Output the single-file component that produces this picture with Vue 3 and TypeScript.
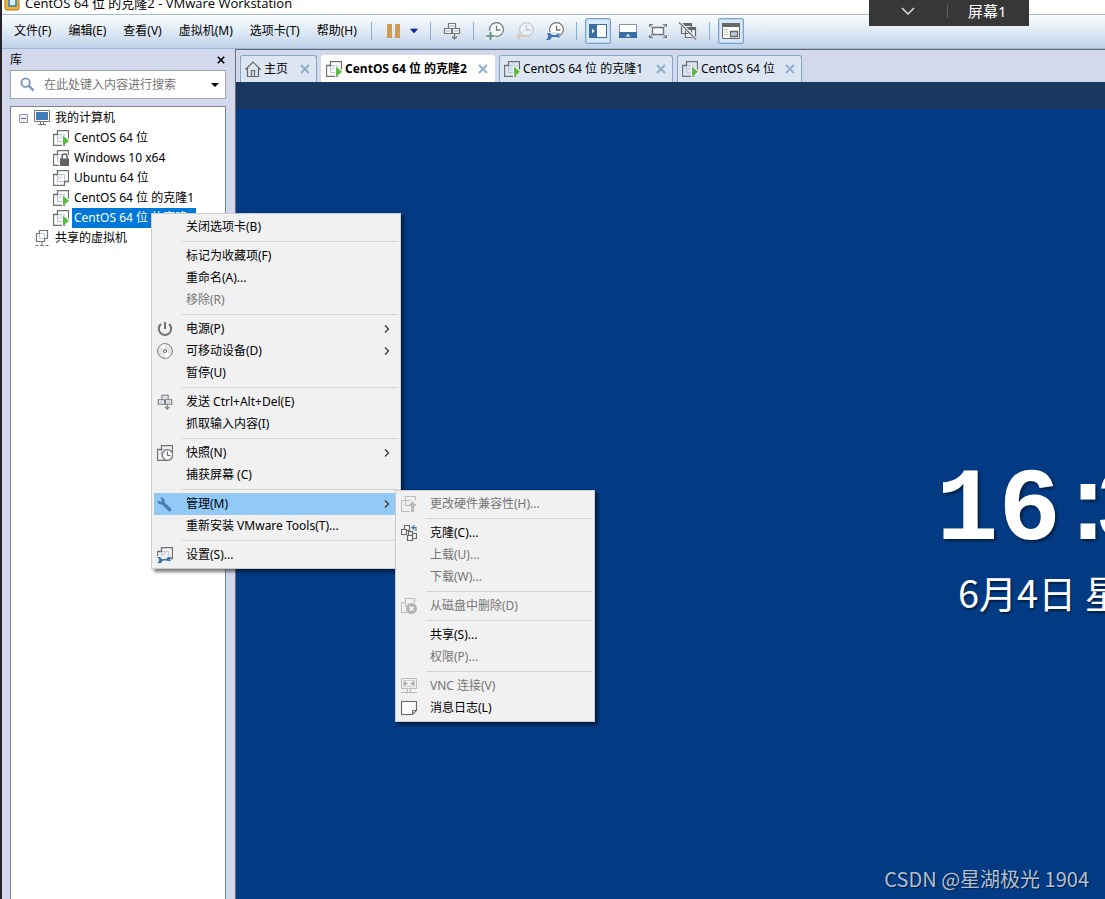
<script setup lang="ts">
import { ref } from 'vue'

interface MenuEntry {
  label?: string
  icon?: string
  disabled?: boolean
  submenu?: boolean
  active?: boolean
}

interface ToolItem {
  name?: string
  icon?: string
  pressed?: boolean
  narrow?: boolean
}

const menus: string[] = ['文件(F)', '编辑(E)', '查看(V)', '虚拟机(M)', '选项卡(T)', '帮助(H)']

const tools: ToolItem[] = [
  {},
  { name: '挂起', icon: 'pause' },
  { name: '电源选项', icon: 'drop', narrow: true },
  {},
  { name: '发送 Ctrl+Alt+Del', icon: 'keys' },
  {},
  { name: '拍摄快照', icon: 'snap-add' },
  { name: '恢复快照', icon: 'snap-back' },
  { name: '管理快照', icon: 'snap-manage' },
  {},
  { name: '显示库', icon: 'library', pressed: true },
  { name: '缩略图栏', icon: 'thumbs' },
  { name: '全屏', icon: 'full' },
  { name: 'Unity', icon: 'unity' },
  {},
  { name: '控制台视图', icon: 'console', pressed: true },
]

const tabs = [
  { label: '主页', icon: 'home', kind: 'home' },
  { label: 'CentOS 64 位 的克隆2', icon: 'vm-run', kind: 'active' },
  { label: 'CentOS 64 位 的克隆1', icon: 'vm-run', kind: 'wide' },
  { label: 'CentOS 64 位', icon: 'vm-run', kind: 'short' },
]

const machines = [
  { label: 'CentOS 64 位', icon: 'vm-run' },
  { label: 'Windows 10 x64', icon: 'vm-lock' },
  { label: 'Ubuntu 64 位', icon: 'vm' },
  { label: 'CentOS 64 位 的克隆1', icon: 'vm-run' },
  { label: 'CentOS 64 位 的克隆2', icon: 'vm-run', selected: true },
]

const contextMenu: MenuEntry[] = [
  { label: '关闭选项卡(B)' },
  {},
  { label: '标记为收藏项(F)' },
  { label: '重命名(A)...' },
  { label: '移除(R)', disabled: true },
  {},
  { label: '电源(P)', icon: 'power', submenu: true },
  { label: '可移动设备(D)', icon: 'disc', submenu: true },
  { label: '暂停(U)' },
  {},
  { label: '发送 Ctrl+Alt+Del(E)', icon: 'keys' },
  { label: '抓取输入内容(I)' },
  {},
  { label: '快照(N)', icon: 'vm-clock', submenu: true },
  { label: '捕获屏幕 (C)' },
  {},
  { label: '管理(M)', icon: 'wrench', submenu: true, active: true },
  { label: '重新安装 VMware Tools(T)...' },
  {},
  { label: '设置(S)...', icon: 'vm-wrench' },
]

const manageMenu: MenuEntry[] = [
  { label: '更改硬件兼容性(H)...', icon: 'vm-up', disabled: true },
  {},
  { label: '克隆(C)...', icon: 'clone' },
  { label: '上载(U)...', disabled: true },
  { label: '下载(W)...', disabled: true },
  {},
  { label: '从磁盘中删除(D)', icon: 'vm-delete', disabled: true },
  {},
  { label: '共享(S)...' },
  { label: '权限(P)...', disabled: true },
  {},
  { label: 'VNC 连接(V)', icon: 'vnc', disabled: true },
  { label: '消息日志(L)', icon: 'note' },
]

const popups = [
  { name: '虚拟机', place: 'context', entries: contextMenu },
  { name: '管理', place: 'manage', entries: manageMenu },
]

const query = ref('')
</script>

<template>
  <div class="app">
    <svg class="defs" aria-hidden="true">
      <symbol id="vm" viewBox="0 0 16 16">
        <path d="M4.500 4.500v7h7v-7zM4 8h3.500M8 4v3.500" fill="none" stroke="#b9c5da" />
        <path d="M4.500 5V.500h11v11H11M5 4.500H.500v11h11V11" fill="none" stroke="#707070" stroke-width="1.300" />
      </symbol>
      <symbol id="vm-run" viewBox="0 0 16 16">
        <use href="#vm" />
        <path d="M9 4v12h1l6-4V9z" fill="#fff" />
        <path d="M10 5.500V16l6-5.200z" fill="#5cba44" />
      </symbol>
      <symbol id="vm-lock" viewBox="0 0 16 16">
        <use href="#vm" />
        <path d="M6 5h10v11H6z" fill="#fff" />
        <path d="M7 8.500h9V16H7z" fill="#636363" />
        <path d="M9 9V6.500a2.500 2.500 0 0 1 5 0V9" fill="none" stroke="#636363" stroke-width="1.500" />
      </symbol>
      <symbol id="vm-clock" viewBox="0 0 16 16">
        <use href="#vm" />
        <circle cx="10.500" cy="10" r="5.300" fill="#f8f8f8" stroke="#747474" stroke-width="1.200" />
        <path d="M10.500 6.500V10.500h3" fill="none" stroke="#666" />
      </symbol>
      <symbol id="vm-wrench" viewBox="0 0 16 16">
        <use href="#vm" />
        <path d="M0 9h12v7H0z" fill="#f1f1f1" />
        <path d="M0 10h3l2 2h4l2-2h3l-1.500 2 1.500 2h-3l-2-.500H6L4 16H0l2-2v-2z" fill="#3f76ad" />
      </symbol>
      <symbol id="vm-up" viewBox="0 0 16 16">
        <path d="M4.500 4.500v-4h10v4M5 4.500H.500v11H9M4.500 4.500v5h4M4.500 4.500h5" fill="none" stroke="#bdbdbd" stroke-width="1.200" />
        <path d="M11.500 5L16 10h-3v6h-3v-6H7z" fill="#b9b9b9" />
      </symbol>
      <symbol id="vm-delete" viewBox="0 0 16 16">
        <path d="M4.500 5V.500h9v4M5 4.500H.500v10H6M4.500 5v4" fill="none" stroke="#bdbdbd" stroke-width="1.200" />
        <circle cx="10.500" cy="10.500" r="5.500" fill="#b3b3b3" />
        <path d="M8.500 8.500l4 4m0-4l-4 4" stroke="#fff" stroke-width="1.500" />
      </symbol>
      <symbol id="clone" viewBox="0 0 16 16">
        <g fill="#f7f7f7" stroke="#666" stroke-width="1.200">
          <path d="M3.500.500h5v5h-5z" />
          <path d="M.500 4.500h5v5h-5z" />
          <path d="M10.500 8.500h5v5h-5z" />
          <path d="M7.500 6.500h4v4h-4z" />
          <path d="M6.500 10.500h5v5h-5z" />
        </g>
        <path d="M15 6V2.500h-4M13.500.500l-2.500 2 2.500 2" fill="none" stroke="#3f76ad" stroke-width="1.200" />
      </symbol>
      <symbol id="vnc" viewBox="0 0 16 16">
        <path d="M.500.500h15v10H.500zM6.500 11v3M9.500 11v3M0 14.500h16" fill="none" stroke="#bababa" />
        <path d="M2.500 2.500h11v6h-11z" fill="none" stroke="#cfcfcf" />
        <path d="M3 3l4 2.500L3 8zM13 3L9 5.500 13 8z" fill="#aaa" />
      </symbol>
      <symbol id="note" viewBox="0 0 16 16">
        <path d="M.500 1.500h15v9l-4 4H.500z" fill="#fcfcfc" stroke="#666" stroke-width="1.200" />
        <path d="M15.500 10.500h-4v4" fill="none" stroke="#666" />
      </symbol>
      <symbol id="wrench" viewBox="0 0 16 16">
        <path d="M4.500 1.500l-1.500 0 2 3-1.500 1.500-3-1.500c0 3 2 4.500 4.500 4l6.500 6.500c1.500 1.500 4-.500 2.500-2.500L7.500 6.500c.500-2.500-.500-4.500-3-5z" fill="#4a7cb3" />
      </symbol>
      <symbol id="power" viewBox="0 0 16 16">
        <path d="M4 3a6.200 6.200 0 1 0 8 0" fill="none" stroke="#747474" stroke-width="2" />
        <path d="M8 1v7" stroke="#747474" stroke-width="2" />
      </symbol>
      <symbol id="disc" viewBox="0 0 16 16">
        <circle cx="8" cy="8" r="7.400" fill="#e6e6e6" stroke="#7b7b7b" />
        <path d="M8 8L3 3.500A7 7 0 0 1 8 1zM8 8l5 4.500A7 7 0 0 1 8 15z" fill="#fbfbfb" />
        <circle cx="8" cy="8" r="1.500" fill="#eee" stroke="#747474" />
      </symbol>
      <symbol id="keys" viewBox="0 0 18 18">
        <path d="M5.500 1.500h7v5h-7zM1.500 6.500h7v5h-7zM9.500 6.500h7v5h-7z" fill="#f9fafc" stroke="#747474" stroke-width="1.200" />
        <path d="M7 4h4M3 9h4M11 9h4" stroke="#c7d4ec" stroke-width="2" />
        <path d="M11.500 11v6M9 14.500l2.500 2.500 2.500-2.500" fill="none" stroke="#747474" stroke-width="1.200" />
      </symbol>
      <symbol id="clock" viewBox="0 0 18 18">
        <circle cx="10.500" cy="7.500" r="6.900" fill="#fcfdff" stroke="#747474" stroke-width="1.200" />
        <path d="M10.500 3.500v4.500h4" fill="none" stroke="#747474" stroke-width="1.300" />
      </symbol>
      <symbol id="snap-add" viewBox="0 0 18 18">
        <use href="#clock" />
        <path d="M0 9h6l3 5v4H0z" fill="#dfe9f5" />
        <path d="M4.500 10v8M.500 14h8" stroke="#6a9b82" stroke-width="2" />
      </symbol>
      <symbol id="snap-back" viewBox="0 0 18 18">
        <use href="#clock" opacity=".3" />
        <path d="M0 14l4-4v3h8v2H4v3z" fill="#d9c8bb" />
      </symbol>
      <symbol id="snap-manage" viewBox="0 0 18 18">
        <use href="#clock" />
        <path d="M0 10h11l2 4v4H0z" fill="#dbe6f3" />
        <path d="M1 11h3l2 2h4l2-1.500h2l-1.500 2 1.500 2h-2l-2-.500H6L4 18H0l2-3v-2z" fill="#3f76ad" />
      </symbol>
      <symbol id="pause" viewBox="0 0 18 18">
        <path d="M3 2h5v14H3zM11 2h5v14h-5z" fill="#d49a52" />
      </symbol>
      <symbol id="drop" viewBox="0 0 10 10">
        <path d="M1.500 3h7L5 7z" fill="#0a22d0" stroke="#12205e" stroke-width=".600" />
      </symbol>
      <symbol id="library" viewBox="0 0 18 18">
        <path d="M0 2h18v14H0z" fill="#396fa5" />
        <path d="M8 3h9v12H8z" fill="#fff" />
        <path d="M3 6.500L5.500 9 3 11.500z" fill="#fff" />
      </symbol>
      <symbol id="thumbs" viewBox="0 0 18 18">
        <path d="M.500 2.500h17v8H.500z" fill="#fff" stroke="#8190a0" />
        <path d="M0 10h18v6H0z" fill="#396fa5" />
        <path d="M6.500 14.500L9 12l2.500 2.500z" fill="#fff" />
      </symbol>
      <symbol id="full" viewBox="0 0 18 18">
        <path d="M3.500 5.500h11v7h-11z" fill="#f6f9fc" stroke="#747474" stroke-width="1.400" />
        <path d="M.500 5V2.500H4M.500 2.500l3 3M14 2.500h3.500V5M17.500 2.500l-3 3M.500 13v2.500H4M.500 15.500l3-3M14 15.500h3.500V13M17.500 15.500l-3-3" fill="none" stroke="#747474" />
      </symbol>
      <symbol id="unity" viewBox="0 0 18 18">
        <path d="M2.500 1.500h10v10h-10zM6.500 5.500h10v10h-10z" fill="#eef3f9" stroke="#686868" stroke-width="1.200" />
        <path d="M3 1h10v3H3zM7 5h10v3H7z" fill="#686868" />
        <path d="M0 0l17 17" stroke="#e9f0f8" stroke-width="3" />
        <path d="M0 .500l17 17" stroke="#747474" stroke-width="1.200" />
      </symbol>
      <symbol id="console" viewBox="0 0 18 18">
        <path d="M.500 1.500h17v15H.500z" fill="#f8fafc" stroke="#686868" />
        <path d="M0 1h18v4H0z" fill="#686868" />
        <path d="M2 7.500h4M2 10h4M2 12.500h4" stroke="#d5c88c" />
        <path d="M8.500 9.500h7v5h-7z" fill="#b9cfe8" stroke="#686868" stroke-width="1.300" />
      </symbol>
      <symbol id="home" viewBox="0 0 16 16">
        <path d="M.500 8.500L8 1l7.500 7.500M2.500 7v8.500h11V7M6.500 15.500v-6h3v6" fill="none" stroke="#666" stroke-width="1.200" />
      </symbol>
      <symbol id="computer" viewBox="0 0 16 16">
        <path d="M.500.500h15v11H.500z" fill="#fff" stroke="#747474" />
        <path d="M2 2h12v8H2z" fill="#3f7ab9" />
        <path d="M6.500 12v2M9.500 12v2M4 14.500h8" stroke="#747474" />
      </symbol>
      <symbol id="shared" viewBox="0 0 16 16">
        <path d="M5.500 3.500h5v5h-5z" fill="none" stroke="#b9c8df" />
        <path d="M5.500 4V.500h8v8H10M6 3.500H2.500v8h8V8M8 12v2.500" fill="none" stroke="#747474" stroke-width="1.200" />
        <path d="M1.500 15.500h3M6 15.500h4M11.500 15.500h3" stroke="#747474" />
      </symbol>
      <symbol id="search" viewBox="0 0 16 16">
        <circle cx="6" cy="6" r="4.500" fill="#f8fbff" stroke="#7896b8" stroke-width="2" />
        <path d="M9.500 9.500l5 5" stroke="#7896b8" stroke-width="2.500" />
      </symbol>
      <symbol id="cross" viewBox="0 0 10 10">
        <path d="M1 1l8 8M9 1L1 9" stroke="currentColor" stroke-width="2" />
      </symbol>
      <symbol id="chevron" viewBox="0 0 8 8">
        <path d="M2 .500L5.500 4 2 7.500" fill="none" stroke="#333" stroke-width="1.200" />
      </symbol>
    </svg>

    <header class="titlebar">
      <svg class="logo" viewBox="0 0 16 16" aria-hidden="true">
        <rect x="1" y="1" width="14" height="14" rx="2" fill="#f0b23a" stroke="#b87812" />
        <rect x="5" y="3" width="7" height="8" fill="#d9edf7" stroke="#2380ad" stroke-width="1.500" />
      </svg>
      <span class="title">CentOS 64 位 的克隆2 - VMware Workstation</span>
    </header>

    <div class="menubar">
      <nav class="menus" aria-label="菜单">
        <button v-for="menu in menus" :key="menu" type="button">{{ menu }}</button>
      </nav>
      <div class="tools">
        <template v-for="(tool, i) in tools" :key="i">
          <button
            v-if="tool.icon"
            type="button"
            class="tool"
            :class="{ pressed: tool.pressed, narrow: tool.narrow }"
            :aria-label="tool.name"
          >
            <svg><use :href="'#' + tool.icon" /></svg>
          </button>
          <span v-else class="divider"></span>
        </template>
      </div>
    </div>

    <div class="body">
      <aside class="sidebar">
        <div class="side-head">
          <span>库</span>
          <button type="button" aria-label="关闭库"><svg><use href="#cross" /></svg></button>
        </div>
        <div class="search">
          <svg class="glass"><use href="#search" /></svg>
          <input v-model="query" type="text" aria-label="搜索" placeholder="在此处键入内容进行搜索" />
          <button type="button" aria-label="搜索选项">
            <svg viewBox="0 0 8 4"><path d="M0 0h8L4 4z" /></svg>
          </button>
        </div>
        <div class="tree">
          <div class="node">
            <button type="button" class="toggle" aria-label="折叠"></button>
            <svg class="icon"><use href="#computer" /></svg>
            <span class="name">我的计算机</span>
          </div>
          <ul>
            <li v-for="vm in machines" :key="vm.label" class="node child">
              <svg class="icon"><use :href="'#' + vm.icon" /></svg>
              <span class="name" :class="{ selected: vm.selected }">{{ vm.label }}</span>
            </li>
          </ul>
          <div class="node shared">
            <svg class="icon"><use href="#shared" /></svg>
            <span class="name">共享的虚拟机</span>
          </div>
        </div>
      </aside>

      <main class="workspace">
        <div class="tabs">
          <div v-for="tab in tabs" :key="tab.label" class="tab" :class="tab.kind">
            <button type="button" class="tab-name">
              <svg><use :href="'#' + tab.icon" /></svg>
              <span>{{ tab.label }}</span>
            </button>
            <button type="button" class="tab-close" :aria-label="'关闭 ' + tab.label">
              <svg><use href="#cross" /></svg>
            </button>
          </div>
        </div>
        <div class="band"></div>
        <div class="screen">
          <div class="clock"><span>16</span><span class="colon">:</span><span>3</span></div>
          <div class="date">6月4日 星</div>
        </div>
      </main>
    </div>

    <div v-for="popup in popups" :key="popup.name" class="popup" :class="popup.place" role="menu" :aria-label="popup.name">
      <template v-for="(entry, i) in popup.entries" :key="i">
        <button
          v-if="entry.label"
          type="button"
          role="menuitem"
          class="entry"
          :class="{ active: entry.active }"
          :disabled="entry.disabled"
        >
          <span class="slot"><svg v-if="entry.icon"><use :href="'#' + entry.icon" /></svg></span>
          <span class="text">{{ entry.label }}</span>
          <svg v-if="entry.submenu" class="more"><use href="#chevron" /></svg>
        </button>
        <div v-else class="rule" role="separator"></div>
      </template>
    </div>

    <div class="screenbar">
      <button type="button" class="expand" aria-label="展开">
        <svg viewBox="0 0 14 8"><path d="M1 1l6 6 6-6" /></svg>
      </button>
      <span class="screen-name">屏幕1</span>
    </div>

    <div class="watermark">CSDN @星湖极光 1904</div>
  </div>
</template>

<style>
body {
  margin: 0;
}
</style>

<style scoped>
.app {
  position: relative;
  display: flex;
  flex-direction: column;
  box-sizing: border-box;
  height: 100vh;
  overflow: hidden;
  border-left: 2px solid #25242a;
  background: #d3d9ec;
  color: #000;
  font: 12px/20px "Noto Sans", "Noto Sans CJK SC", sans-serif;
  white-space: nowrap;
}

.defs {
  position: absolute;
  width: 0;
  height: 0;
}

button {
  margin: 0;
  padding: 0;
  border: 0;
  background: none;
  color: inherit;
  font: inherit;
}

svg {
  display: block;
  flex: none;
}

.titlebar {
  display: flex;
  align-items: flex-end;
  gap: 5px;
  box-sizing: border-box;
  height: 14px;
  padding-left: 2px;
  overflow: hidden;
  background: #fff;
  font-family: "Open Sans", "Noto Sans CJK SC", sans-serif;
  font-size: 13px;
  line-height: 22px;
}

.logo {
  width: 16px;
  height: 16px;
  margin-bottom: 3px;
}

.menubar {
  display: flex;
  box-sizing: border-box;
  height: 35px;
  padding-left: 4px;
  border-top: 1px solid #a3bad2;
  border-bottom: 1px solid #9eb9d6;
  background: linear-gradient(#fafcfe, #e0eaf5 50%, #bed1e9);
}

.menus {
  display: flex;
  gap: 1px;
  align-items: center;
  padding-bottom: 1px;
}

.menus button {
  padding: 0 8px;
}

.tools {
  display: flex;
  align-items: center;
  padding-bottom: 1px;
}

.tool {
  display: flex;
  align-items: center;
  justify-content: center;
  box-sizing: border-box;
  width: 26px;
  height: 26px;
  border: 1px solid transparent;
  border-radius: 2px;
}

.tool svg {
  width: 18px;
  height: 18px;
}

.tool + .tool {
  margin-left: 4px;
}

.tool + .tool.narrow {
  width: 16px;
  margin-left: 0;
}

.tool.narrow svg {
  width: 10px;
  height: 10px;
}

.tool.pressed {
  border-color: #7ba2c8;
  background: #d7e8fa;
  box-shadow: inset 0 0 0 1px #b9d4ef;
}

.divider {
  width: 1px;
  height: 18px;
  margin: 0 8px;
  background: #88abd0;
}

.divider:first-child {
  margin-left: 6px;
}

.body {
  display: flex;
  flex: 1;
  min-height: 0;
}

.sidebar {
  display: flex;
  flex: none;
  flex-direction: column;
  box-sizing: border-box;
  width: 233px;
  padding: 0 9px 0 8px;
}

.side-head {
  display: flex;
  align-items: center;
  justify-content: space-between;
  height: 21px;
}

.side-head svg {
  width: 10px;
  height: 8px;
}

.search {
  display: flex;
  align-items: center;
  box-sizing: border-box;
  height: 29px;
  padding: 0 6px 0 9px;
  border: 1px solid #a2a5ab;
  background: #fff;
}

.glass {
  width: 15px;
  height: 15px;
}

.search input {
  flex: 1;
  min-width: 0;
  margin: 0 0 0 9px;
  padding: 0;
  border: 0;
  outline: 0;
  background: none;
  font: inherit;
}

.search input::placeholder {
  color: #747474;
  opacity: 1;
}

.search button svg {
  width: 8px;
  height: 4px;
}

.tree {
  flex: 1;
  margin-top: 7px;
  padding-top: 1px;
  border: 1px solid #7c8492;
  border-bottom: 0;
  background: #fff;
}

.tree ul {
  margin: 0;
  padding: 0;
  list-style: none;
}

.node {
  display: flex;
  align-items: center;
  height: 20px;
  padding-left: 8px;
}

.node.child {
  padding-left: 42px;
}

.node.shared {
  padding-left: 23px;
}

.icon {
  width: 16px;
  height: 16px;
}

.name {
  margin-left: 3px;
  padding: 0 2px;
}

.name.selected {
  background: #0078d7;
  color: #fff;
}

.toggle {
  width: 9px;
  height: 9px;
  margin-right: 6px;
  border: 1px solid #949494;
  border-radius: 1px;
  background: linear-gradient(#4661a6, #4661a6) center / 5px 1px no-repeat, #f3f3f3;
  box-sizing: border-box;
}

.workspace {
  display: flex;
  flex: 1;
  flex-direction: column;
  min-width: 0;
  border-top: 1px solid #62666e;
  border-left: 1px solid #6e7074;
}

.tabs {
  display: flex;
  gap: 4px;
  padding: 5px 4px 0;
}

.tab {
  display: flex;
  align-items: center;
  justify-content: space-between;
  box-sizing: border-box;
  width: 174px;
  height: 27px;
  padding: 0 6px 0 4px;
  border: 1px solid #86a6c6;
  border-bottom: 0;
  border-radius: 3px 3px 0 0;
  background: #dce6f3;
}

.tab.home {
  width: 77px;
}

.tab.short {
  width: 125px;
}

.tab.active {
  border-color: #fff;
  background: #fff;
  font-weight: bold;
}

.tab-name {
  display: flex;
  align-items: center;
  gap: 3px;
}

.tab-name svg {
  width: 16px;
  height: 16px;
}

.tab-close {
  color: #8eafca;
}

.tab-close svg {
  width: 10px;
  height: 10px;
}

.band {
  height: 27px;
  background: #1a385f;
}

.screen {
  flex: 1;
  padding: 342px 0 0 700px;
  overflow: hidden;
  background: #023b83;
  color: #fff;
}

.clock {
  display: flex;
  font: bold 104px/120px "Liberation Mono", monospace;
  text-shadow: 2px 2px 3px rgba(0, 0, 0, 0.5);
}

.colon {
  margin: 0 -24px 0 -4px;
}

.date {
  margin-top: -7px;
  padding-left: 22px;
  font: 38px/56px "Noto Sans CJK SC", sans-serif;
  text-shadow: 1px 2px 2px rgba(0, 0, 0, 0.5);
}

.popup {
  position: absolute;
  box-sizing: border-box;
  padding: 2px;
  border: 1px solid #ccc;
  background: #f1f1f1;
  box-shadow: 3px 3px 3px rgba(0, 0, 0, 0.5);
}

.popup.context {
  top: 213px;
  left: 149px;
  width: 250px;
}

.popup.manage {
  top: 490px;
  left: 393px;
  width: 200px;
}

.entry {
  display: flex;
  align-items: center;
  width: 100%;
  height: 22px;
  padding: 0 7px 0 3px;
}

.entry.active {
  background: #91c9f7;
}

.entry:disabled {
  color: #767676;
}

.slot {
  width: 29px;
}

.slot svg {
  width: 16px;
  height: 16px;
}

.text {
  flex: 1;
  text-align: left;
}

.more {
  width: 8px;
  height: 8px;
}

.rule {
  height: 1px;
  margin: 3px 0 3px 28px;
  background: #d4d4d4;
}

.screenbar {
  position: absolute;
  top: 0;
  right: 76px;
  display: flex;
  align-items: center;
  box-sizing: border-box;
  width: 160px;
  height: 26px;
  padding-bottom: 4px;
  background: #373737;
  color: #fff;
  font-size: 15px;
}

.expand {
  display: flex;
  justify-content: center;
  width: 79px;
  padding: 3px 0;
  border-right: 1px solid #626262;
}

.expand svg {
  width: 14px;
  height: 8px;
  fill: none;
  stroke: #ddd;
  stroke-width: 1.5;
}

.screen-name {
  margin-left: 20px;
}

.watermark {
  position: absolute;
  right: 16px;
  bottom: 5px;
  color: #b3bfd0;
  font: 20px/30px "Noto Sans CJK SC", sans-serif;
  text-shadow: 1px 1px 1px rgba(0, 0, 0, 0.5);
}
</style>
